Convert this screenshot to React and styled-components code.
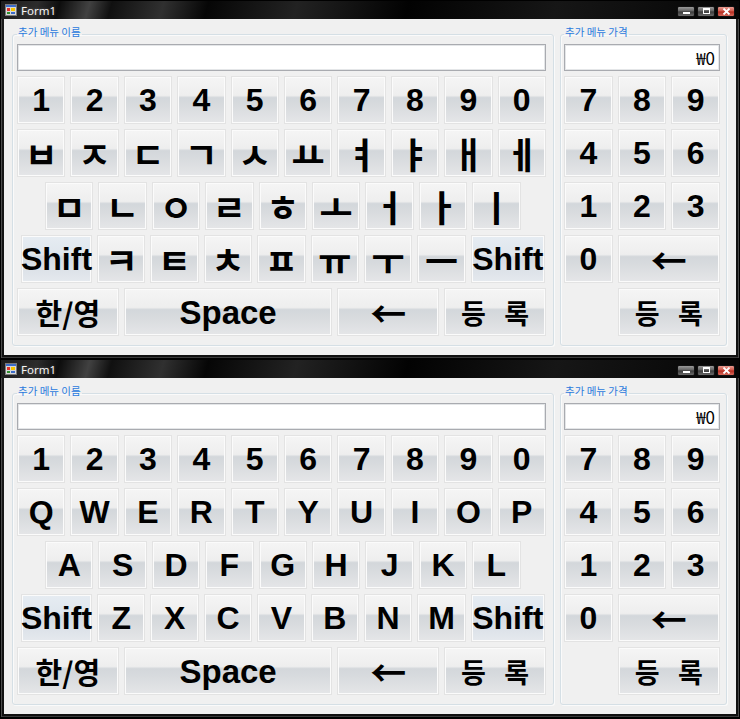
import styled, { createGlobalStyle } from "styled-components";

const GlobalStyle = createGlobalStyle`
  html, body {
    margin: 0;
    padding: 0;
    background: #000;
  }
  body {
    width: 740px;
    height: 719px;
    overflow: hidden;
  }
`;

const LATIN = `"Liberation Sans", Arial, sans-serif`;
const HANGUL = `"Noto Sans CJK KR", "Noto Sans", sans-serif`;
const UI = `"Noto Sans", "Noto Sans CJK KR", sans-serif`;

const UNIT = 48.4;
const WIDE = UNIT * 2 + 5;
const SPACE = UNIT * 4 + 15;

const digits = ["1", "2", "3", "4", "5", "6", "7", "8", "9", "0"];

const hangulRows = [
  ["ㅂ", "ㅈ", "ㄷ", "ㄱ", "ㅅ", "ㅛ", "ㅕ", "ㅑ", "ㅐ", "ㅔ"],
  ["ㅁ", "ㄴ", "ㅇ", "ㄹ", "ㅎ", "ㅗ", "ㅓ", "ㅏ", "ㅣ"],
  ["ㅋ", "ㅌ", "ㅊ", "ㅍ", "ㅠ", "ㅜ", "ㅡ"],
];

const englishRows = [
  "QWERTYUIOP".split(""),
  "ASDFGHJKL".split(""),
  "ZXCVBNM".split(""),
];

function AppIcon() {
  return (
    <svg width="12" height="12" viewBox="0 0 12 12">
      <rect x="0.5" y="0.5" width="11" height="11" fill="#d8d8d8" stroke="#7a7a7a" />
      <rect x="1" y="1" width="10" height="2" fill="#3b6cc9" />
      <rect x="2" y="4" width="3" height="3" fill="#e0302a" />
      <rect x="6" y="4" width="4" height="3" fill="#f5c400" />
      <rect x="2" y="8" width="3" height="2" fill="#2f8f2f" />
      <rect x="6" y="8" width="4" height="2" fill="#3b6cc9" />
    </svg>
  );
}

function CaptionButtons() {
  return (
    <Caption>
      <CapBtn aria-label="Minimize">
        <svg width="9" height="7" viewBox="0 0 9 7">
          <rect x="1" y="4" width="7" height="2" fill="#fff" />
        </svg>
      </CapBtn>
      <CapBtn aria-label="Maximize">
        <svg width="9" height="7" viewBox="0 0 9 7">
          <rect x="1.5" y="0.5" width="6" height="5" fill="none" stroke="#fff" />
          <rect x="1" y="0" width="7" height="2" fill="#fff" />
        </svg>
      </CapBtn>
      <CapBtn $close aria-label="Close">
        <svg width="9" height="7" viewBox="0 0 9 7">
          <path d="M1.5 0.5 L7.5 6.5 M7.5 0.5 L1.5 6.5" stroke="#fff" strokeWidth="1.8" />
        </svg>
      </CapBtn>
    </Caption>
  );
}

function Form({ rows, script }) {
  const letterFont = script === "ko" ? "ko" : "latin";
  const letterSize = script === "ko" ? 36 : 32;
  return (
    <Window>
      <TitleBar>
        <AppIcon />
        <Title>Form1</Title>
        <CaptionButtons />
      </TitleBar>
      <Client>
        <Group $width={542} $pad="2px 7px 9px 4px">
          <Legend>추가 메뉴 이름</Legend>
          <TextBox type="text" />
          <Keyboard>
            <KeyRow>
              {digits.map((d) => (
                <Key key={d}>{d}</Key>
              ))}
            </KeyRow>
            <KeyRow>
              {rows[0].map((k) => (
                <Key key={k} $font={letterFont} $size={letterSize}>
                  {k}
                </Key>
              ))}
            </KeyRow>
            <KeyRow $indent={28}>
              {rows[1].map((k) => (
                <Key key={k} $font={letterFont} $size={letterSize}>
                  {k}
                </Key>
              ))}
            </KeyRow>
            <KeyRow $indent={4}>
              <Key $w={71} $tone="blue">Shift</Key>
              {rows[2].map((k) => (
                <Key key={k} $font={letterFont} $size={letterSize}>
                  {k}
                </Key>
              ))}
              <Key $w={74} $tone="blue">Shift</Key>
            </KeyRow>
            <KeyRow>
              <Key $w={WIDE} $font="ko" $size={29}>한/영</Key>
              <Key $w={SPACE} $size={33}>Space</Key>
              <Key $w={WIDE} $font="ko" $size={36}>←</Key>
              <Key $w={WIDE} $font="ko" $size={27}>등 록</Key>
            </KeyRow>
          </Keyboard>
        </Group>
        <Group $pad="2px 6px 9px 3px">
          <Legend>추가 메뉴 가격</Legend>
          <TextBox type="text" $align="right" defaultValue="₩0" />
          <Pad>
            {["7", "8", "9", "4", "5", "6", "1", "2", "3", "0"].map((d) => (
              <Key key={d}>{d}</Key>
            ))}
            <Key $span={2} $font="ko" $size={36}>←</Key>
            <Key $col={2} $span={2} $font="ko" $size={27}>등 록</Key>
          </Pad>
        </Group>
      </Client>
    </Window>
  );
}

export default function App() {
  return (
    <>
      <GlobalStyle />
      <Desktop>
        <Form rows={hangulRows} script="ko" />
        <Form rows={englishRows} script="en" />
      </Desktop>
    </>
  );
}

const Desktop = styled.div`
  display: flex;
  flex-direction: column;
  width: 740px;
`;

const Window = styled.div`
  display: flex;
  flex-direction: column;
  box-sizing: border-box;
  width: 740px;
  border: 1px solid #000;
  padding: 0 3px 3px 3px;
  background: linear-gradient(180deg, #1a1a1a 0%, #101010 100%);
  box-shadow: inset 1px 0 0 #4a4a4a, inset -1px 0 0 #4a4a4a, inset 0 -1px 0 #3a3a3a;
`;

const TitleBar = styled.div`
  display: flex;
  align-items: center;
  height: 18px;
  margin: 0 -3px;
  padding: 0 4px;
  background: linear-gradient(
    105deg,
    #1c1c1c 0%,
    #2c2c2c 5%,
    #0d0d0d 8%,
    #414141 12%,
    #101010 15%,
    #303030 22%,
    #060606 28%,
    #222 40%,
    #020202 55%,
    #161616 75%,
    #050505 100%
  );
`;

const Title = styled.span`
  margin-left: 4px;
  font-family: ${UI};
  font-size: 11.5px;
  color: #f4f4f4;
  text-shadow: 0 0 3px rgba(255, 255, 255, 0.25);
`;

const Caption = styled.div`
  display: flex;
  gap: 2px;
  margin-left: auto;
  margin-top: 2px;
`;

const CapBtn = styled.span`
  display: flex;
  align-items: center;
  justify-content: center;
  width: 18px;
  height: 11px;
  box-sizing: border-box;
  border: 1px solid #111;
  border-radius: 2px;
  background: ${(p) =>
    p.$close
      ? "linear-gradient(180deg, #e79a90 0%, #cf5447 48%, #b3281c 52%, #d66a5c 100%)"
      : "linear-gradient(180deg, #9a9a9a 0%, #5e5e5e 48%, #3a3a3a 52%, #6a6a6a 100%)"};
`;

const Client = styled.div`
  display: flex;
  align-items: stretch;
  gap: 6px;
  padding: 7px 9px 9px 8px;
  background: #f0f0f0;
`;

const Group = styled.fieldset`
  box-sizing: border-box;
  flex: ${(p) => (p.$width ? `0 0 ${p.$width}px` : "1 1 auto")};
  min-width: 0;
  margin: 0;
  padding: ${(p) => p.$pad};
  border: 1px solid #d5dfe5;
  border-radius: 3px;
  box-shadow: inset 1px 1px 0 #fafafa, 1px 1px 0 #fafafa;
`;

const Legend = styled.legend`
  padding: 0 1px 4px;
  margin-left: 0;
  font-family: ${HANGUL};
  font-size: 10.5px;
  line-height: 12px;
  color: #2a7ade;
`;

const TextBox = styled.input`
  display: block;
  box-sizing: border-box;
  width: 100%;
  height: 27px;
  margin: 0 0 5px;
  padding: 0 4px;
  border: 1px solid #a9abb0;
  box-shadow: inset 0 0 0 1px #e4e6e8;
  background: #fff;
  outline: none;
  text-align: ${(p) => p.$align || "left"};
  font-family: ${HANGUL};
  font-size: 17px;
  color: #000;
`;

const Keyboard = styled.div`
  display: flex;
  flex-direction: column;
  gap: 5px;
`;

const KeyRow = styled.div`
  display: flex;
  gap: 5px;
  padding-left: ${(p) => p.$indent || 0}px;
`;

const Pad = styled.div`
  display: grid;
  grid-template-columns: repeat(3, 1fr);
  grid-auto-rows: 48px;
  gap: 5px;
`;

const grayFace =
  "linear-gradient(180deg, #f5f5f5 0%, #eeeeee 40%, #d3d7db 45%, #d8dbde 62%, #e5e6e8 100%)";
const blueFace =
  "linear-gradient(180deg, #e6ecf2 0%, #dfe6ed 40%, #d3dae2 45%, #d9dfe6 62%, #e5e9ee 100%)";

const Key = styled.button`
  flex: 0 0 ${(p) => p.$w ?? UNIT}px;
  min-width: 0;
  height: 48px;
  box-sizing: border-box;
  margin: 0;
  padding: 0;
  display: flex;
  align-items: center;
  justify-content: center;
  grid-column: ${(p) =>
    p.$span ? `${p.$col ?? "auto"} / span ${p.$span}` : "auto"};
  border: 1px solid #e3e3e3;
  border-radius: 0;
  box-shadow: inset 0 0 0 1px #fbfbfb;
  background: ${(p) => (p.$tone === "blue" ? blueFace : grayFace)};
  color: #000;
  font-family: ${(p) => (p.$font === "ko" ? HANGUL : LATIN)};
  font-weight: 700;
  font-size: ${(p) => p.$size ?? 32}px;
  line-height: 1;
  white-space: pre;
  word-spacing: 0.45em;
  cursor: pointer;
`;
